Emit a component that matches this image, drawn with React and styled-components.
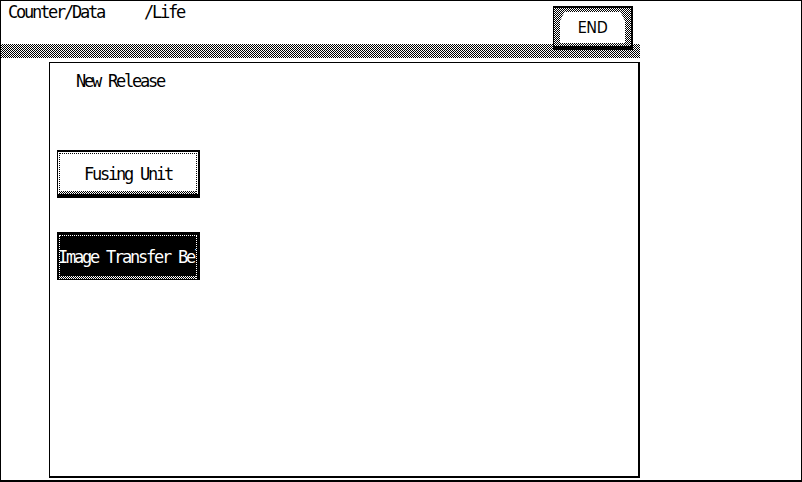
import React from "react"
import styled, { createGlobalStyle, css } from "styled-components"

const GlobalStyle = createGlobalStyle`
  html, body {
    margin: 0;
    padding: 0;
    background: #fff;
  }
  * {
    box-sizing: border-box;
  }
`

// 1px black/white dither used for the hatched bars
const checker = (fg = "#000", bg = "#fff") => css`
  background-image: repeating-conic-gradient(${fg} 0% 25%, ${bg} 0% 50%);
  background-size: 2px 2px;
`

export default function App() {
  return (
    <>
      <GlobalStyle />
      <Screen>
        <Header>
          <Title>{"Counter/Data     /Life"}</Title>
          <EndButton>
            <EndFace>END</EndFace>
          </EndButton>
        </Header>
        <Band />
        <Panel>
          <Caption>New Release</Caption>
          <ButtonList>
            <UnitButton>
              <Face>
                <Label>Fusing Unit</Label>
                <Strip />
              </Face>
            </UnitButton>
            <UnitButton $active>
              <Face $active>
                <Label $active>Image Transfer Belt</Label>
                <Strip $active />
              </Face>
            </UnitButton>
          </ButtonList>
        </Panel>
      </Screen>
    </>
  )
}

const Screen = styled.div`
  width: 802px;
  height: 482px;
  border: 1px solid #000;
  border-bottom-width: 2px;
  display: flex;
  flex-direction: column;
  font-family: "DejaVu Sans Mono", "Liberation Mono", monospace;
  font-size: 17px;
  letter-spacing: -2.24px;
  color: #000;
`

const Header = styled.div`
  display: flex;
  justify-content: space-between;
  align-items: flex-start;
  width: 639px;
  height: 43px;
  padding-left: 7px;
  padding-right: 7px;
`

const Title = styled.div`
  white-space: pre;
  line-height: 18px;
  padding-top: 2px;
`

const EndButton = styled.div`
  position: relative;
  z-index: 1;
  width: 80px;
  height: 44px;
  margin-top: 5px;
  border: 1px solid #000;
  border-top-width: 2px;
  border-right-width: 2px;
  border-bottom-width: 4px;
  padding: 3px 6px 3px 6px;
  background-color: #fff;
  ${checker()}
`

const EndFace = styled.div`
  height: 100%;
  display: flex;
  align-items: center;
  justify-content: center;
  background: #fff;
  border-top: 1px dotted #000;
  font-family: "DejaVu Sans Condensed", "DejaVu Sans", sans-serif;
  font-size: 16px;
  letter-spacing: -0.5px;
  clip-path: polygon(5px 0, calc(100% - 5px) 0, 100% 10px, 100% 100%, 0 100%, 0 10px);
`

const Band = styled.div`
  width: 639px;
  height: 14px;
  flex: none;
  ${checker()}
`

const Panel = styled.div`
  width: 591px;
  height: 416px;
  margin-top: 4px;
  margin-left: 48px;
  border: 1px solid #000;
  border-right-width: 2px;
  border-bottom-width: 2px;
  padding: 9px 0 0 7px;
  display: flex;
  flex-direction: column;
`

const Caption = styled.div`
  line-height: 18px;
  margin-left: 19px;
`

const ButtonList = styled.div`
  display: flex;
  flex-direction: column;
  gap: 34px;
  margin-top: 60px;
`

const UnitButton = styled.div`
  width: 143px;
  height: 48px;
  border: 1px solid #000;
  border-top-width: 2px;
  border-right-width: 2px;
  border-bottom-width: ${(p) => (p.$active ? "1px" : "4px")};
  background: ${(p) => (p.$active ? "#000" : "#fff")};
  padding: 1px 1px 0 1px;
`

const Face = styled.div`
  height: 100%;
  display: flex;
  flex-direction: column;
  border: 1px dotted ${(p) => (p.$active ? "#fff" : "#000")};
  border-bottom: none;
  color: ${(p) => (p.$active ? "#fff" : "#000")};
  overflow: hidden;
`

// long names start at the left edge and run off the right side
const Label = styled.div`
  flex: 1;
  display: flex;
  align-items: center;
  justify-content: safe center;
  white-space: nowrap;
  line-height: 18px;
  padding-top: 2px;
  margin-left: ${(p) => (p.$active ? "-2px" : "0")};
`

const Strip = styled.div`
  height: 3px;
  flex: none;
  ${(p) => (p.$active ? checker("#fff", "#000") : checker())}
`
